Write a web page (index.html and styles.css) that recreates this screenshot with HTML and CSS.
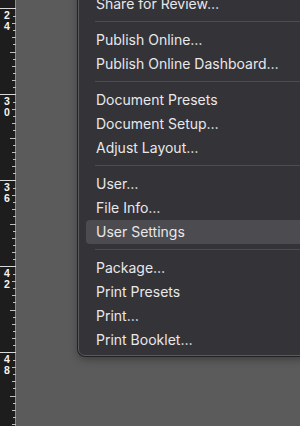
FILE: index.html
```html
<!DOCTYPE html>
<html>
<head>
<meta charset="utf-8">
<link rel="stylesheet" href="styles.css">
</head>
<body>
<div class="app">
  <div class="ruler">
    <svg class="ruler-lines" width="16" height="426" viewBox="0 0 16 426">
      <g stroke="#d8d8d8" stroke-width="1">
        <line x1="0" y1="8.5" x2="16" y2="8.5"/>
        <line x1="0" y1="94.5" x2="16" y2="94.5"/>
        <line x1="0" y1="180.5" x2="16" y2="180.5"/>
        <line x1="0" y1="266.5" x2="16" y2="266.5"/>
        <line x1="0" y1="352.5" x2="16" y2="352.5"/>
      </g>
      <g stroke="#bdbdbd" stroke-width="1" id="ticks"></g>
    </svg>
    <div class="seg"><div class="lbl">24</div></div>
    <div class="seg"><div class="lbl">30</div></div>
    <div class="seg"><div class="lbl">36</div></div>
    <div class="seg"><div class="lbl">42</div></div>
    <div class="seg"><div class="lbl">48</div></div>
  </div>
  <div class="canvas">
    <div class="menu">
      <div class="item">Share for Review…</div>
      <div class="sep"></div>
      <div class="item">Publish Online…</div>
      <div class="item">Publish Online Dashboard…</div>
      <div class="sep"></div>
      <div class="item">Document Presets</div>
      <div class="item">Document Setup…</div>
      <div class="item">Adjust Layout…</div>
      <div class="sep"></div>
      <div class="item">User…</div>
      <div class="item">File Info…</div>
      <div class="item active">User Settings</div>
      <div class="sep"></div>
      <div class="item">Package…</div>
      <div class="item">Print Presets</div>
      <div class="item">Print…</div>
      <div class="item">Print Booklet…</div>
    </div>
  </div>
</div>
<script src="script.js"></script>
</body>
</html>
```

FILE: script.js
```js
(function () {
  var g = document.getElementById('ticks');
  var ns = 'http://www.w3.org/2000/svg';
  var majors = [8.5, 94.5, 180.5, 266.5, 352.5];
  majors.forEach(function (m) {
    for (var k = 1; k < 12; k++) {
      var y = Math.round(m + k * 86 / 12) + 0.5;
      if (y > 426) break;
      var len = k === 6 ? 6 : (k % 2 === 0 ? 4 : 3);
      var l = document.createElementNS(ns, 'line');
      l.setAttribute('x1', 16 - len);
      l.setAttribute('x2', 16);
      l.setAttribute('y1', y);
      l.setAttribute('y2', y);
      g.appendChild(l);
    }
  });
})();
```

FILE: styles.css
```css
html, body {
  margin: 0;
  padding: 0;
  background: #5b5b5b;
}
.app {
  display: flex;
  width: 300px;
  height: 426px;
  overflow: hidden;
}
.ruler {
  position: relative;
  width: 16px;
  flex: 0 0 16px;
  padding-top: 9px;
  box-sizing: border-box;
  background: #1d1d1d;
  border-right: 1px solid #8c8c8c;
  display: flex;
  flex-direction: column;
}
.ruler-lines {
  position: absolute;
  left: 0;
  top: 0;
  display: block;
}
.seg {
  position: relative;
  flex: 0 0 86px;
  height: 86px;
}
.lbl {
  writing-mode: vertical-lr;
  text-orientation: upright;
  width: 13px;
  line-height: 13px;
  font-family: "Liberation Sans", Arial, sans-serif;
  font-weight: bold;
  font-size: 10.5px;
  letter-spacing: -1.5px;
  color: #f4f4f4;
}
.canvas {
  position: relative;
  flex: 1;
  background: #5b5b5b;
}
.menu {
  position: absolute;
  left: 62px;
  top: -14px;
  width: 260px;
  padding: 5px 0 3px 7px;
  background: #343338;
  border: 1px solid #5a595e;
  border-radius: 7px;
  box-shadow: 0 0 0 1px #232323, 0 3px 8px rgba(0,0,0,0.35);
  font-family: "Inter", "Noto Sans", sans-serif;
  font-size: 14px;
  color: #e8e8ea;
}
.item {
  height: 24px;
  line-height: 24px;
  padding-left: 10px;
  white-space: nowrap;
  border-radius: 4px 0 0 4px;
}
.item.active {
  background: #4c4b50;
}
.sep {
  height: 12px;
  position: relative;
  margin-left: 9px;
}
.sep::after {
  content: "";
  position: absolute;
  left: 0;
  right: 0;
  top: 5px;
  height: 1px;
  background: #4d4c52;
}
```
